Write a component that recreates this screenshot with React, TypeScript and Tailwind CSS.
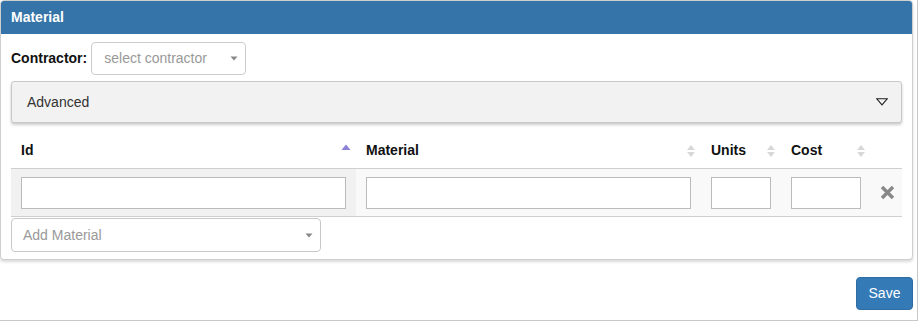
import React from "react";

const font = { fontFamily: '"Liberation Sans", Arial, sans-serif' };

function SortIcon({ active }: { active?: boolean }) {
  if (active) {
    return (
      <svg width="10" height="14" viewBox="0 0 10 14" className="shrink-0">
        <path d="M0.5 6 L5 0.5 L9.5 6 Z" fill="#8c82d6" />
      </svg>
    );
  }
  return (
    <svg width="10" height="14" viewBox="0 0 10 14" className="shrink-0">
      <path d="M1 6 L5 1 L9 6 Z" fill="#d8d8d8" />
      <path d="M1 8 L5 13 L9 8 Z" fill="#d8d8d8" />
    </svg>
  );
}

function Caret() {
  return (
    <svg width="8" height="5" viewBox="0 0 8 5">
      <path d="M0.5 0.5 L7.5 0.5 L4 4.5 Z" fill="#888" />
    </svg>
  );
}

const columns = [
  { name: "Id", width: "w-[345px]", active: true },
  { name: "Material", width: "w-[345px]" },
  { name: "Units", width: "w-[80px]" },
  { name: "Cost", width: "w-[90px]" },
];

export default function App() {
  return (
    <div
      className="w-[918px] h-[321px] border-r border-b border-[#c8c8c8] bg-white text-[14px] text-[#333]"
      style={font}
    >
      <div className="w-[913px] border border-[#cfcfcf] rounded-[4px] overflow-hidden shadow-[0_2px_3px_rgba(0,0,0,0.15)] bg-white">
        <div className="h-[33px] bg-[#3574a9] flex items-center px-[10px] text-white font-bold">
          Material
        </div>

        <div className="px-[10px] pb-[7px]">
          <div className="flex items-center gap-[4px] mt-[8px] h-[33px]">
            <span className="font-bold text-[#111]">Contractor:</span>
            <div className="w-[155px] h-[33px] border border-[#ccc] rounded-[4px] flex items-center justify-between pl-[12px] pr-[7px] text-[#999]">
              <span>select contractor</span>
              <Caret />
            </div>
          </div>

          <div className="mt-[6px] h-[42px] bg-[#f2f2f2] border border-[#c8c8c8] rounded-[3px] shadow-[0_2px_3px_rgba(0,0,0,0.2)] flex items-center justify-between pl-[15px] pr-[13px]">
            <span>Advanced</span>
            <svg width="12" height="8" viewBox="0 0 12 8">
              <path d="M0.8 0.8 L11.2 0.8 L6 6.8 Z" fill="none" stroke="#222" strokeWidth="1.1" />
            </svg>
          </div>

          <div className="w-[891px]">
            <div className="flex h-[46px] items-center border-b border-[#cfcfcf] font-bold text-[#111]">
              {columns.map((c) => (
                <div
                  key={c.name}
                  className={`${c.width} pl-[10px] pr-[5px] flex items-center justify-between pt-[10px]`}
                >
                  <span>{c.name}</span>
                  <SortIcon active={c.active} />
                </div>
              ))}
            </div>

            <div className="flex h-[48px] items-center bg-[#f9f9f9] border-b border-[#cfcfcf]">
              <div className="w-[345px] h-full bg-[#f1f1f1] pl-[10px] pr-[10px] flex items-center">
                <div className="w-full h-[32px] border border-[#bbb] bg-white" />
              </div>
              <div className="w-[345px] h-full pl-[10px] pr-[10px] flex items-center">
                <div className="w-full h-[32px] border border-[#bbb] bg-white" />
              </div>
              <div className="w-[80px] h-full pl-[10px] flex items-center">
                <div className="w-[60px] h-[32px] border border-[#bbb] bg-white" />
              </div>
              <div className="w-[90px] h-full pl-[10px] flex items-center">
                <div className="w-[70px] h-[32px] border border-[#bbb] bg-white" />
              </div>
              <div className="flex-1 h-full flex items-center justify-center pl-[1px]">
                <svg width="15" height="15" viewBox="0 0 15 15">
                  <path d="M2 2 L13 13 M13 2 L2 13" stroke="#888" strokeWidth="3.4" strokeLinecap="butt" />
                </svg>
              </div>
            </div>
          </div>

          <div className="mt-[1px] w-[310px] h-[34px] border border-[#c8c8c8] rounded-[4px] flex items-center justify-between pl-[11px] pr-[7px] text-[#999]">
            <span>Add Material</span>
            <Caret />
          </div>
        </div>
      </div>

      <div className="flex justify-end w-[913px] mt-[17px]">
        <button className="w-[57px] h-[33px] bg-[#337ab7] border border-[#2e6da4] rounded-[4px] text-white">
          Save
        </button>
      </div>
    </div>
  );
}
